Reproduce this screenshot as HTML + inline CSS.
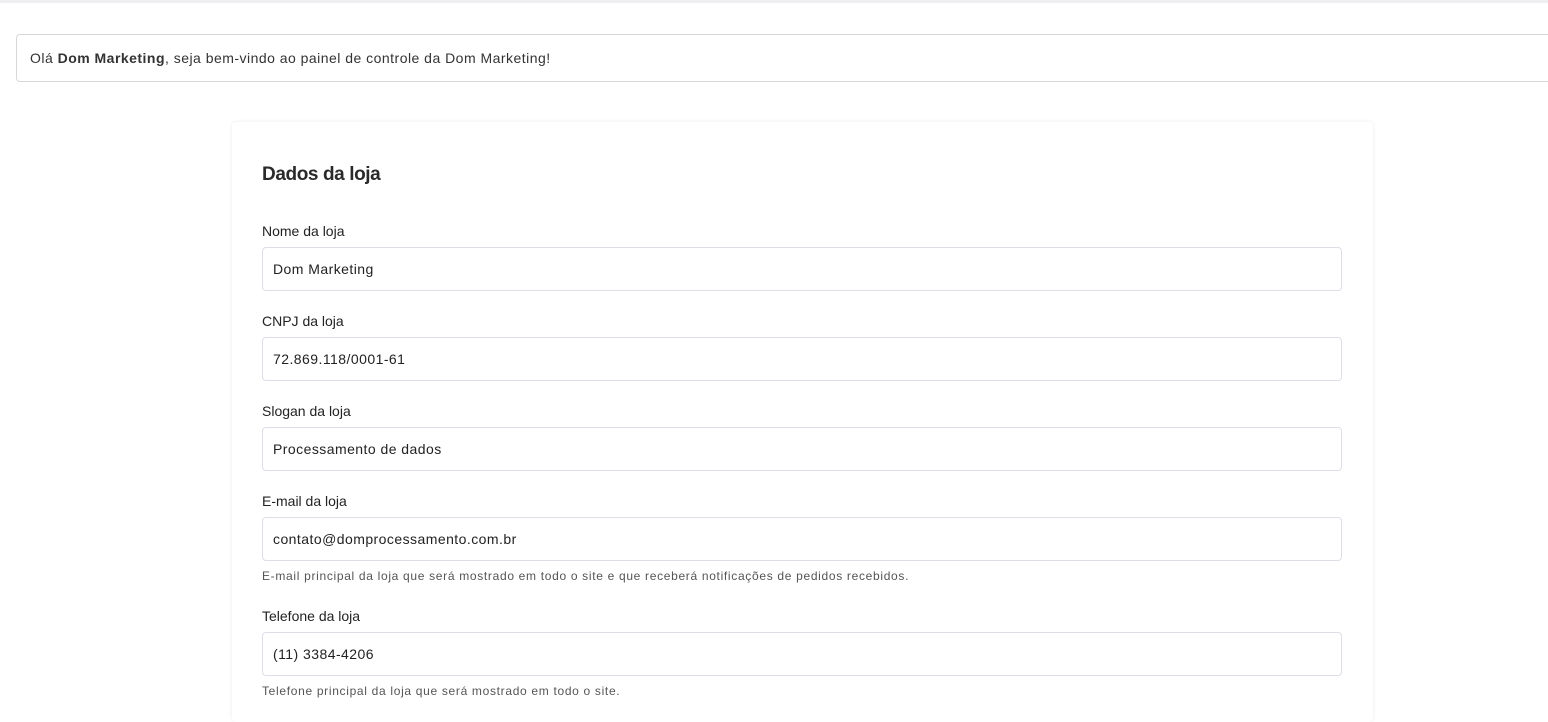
<!DOCTYPE html>
<html><head><meta charset="utf-8"><style>
*{box-sizing:border-box;margin:0;padding:0}
html,body{width:1548px;height:722px;overflow:hidden}
body{background:#fff;font-family:"Liberation Sans",sans-serif;color:#222;position:relative}
.top{position:absolute;left:0;top:0;width:1548px;height:3px;background:#eeeef0}
.greet{position:absolute;left:16px;top:34px;width:1560px;height:48px;border:1px solid #d8d8dc;border-radius:4px;font-size:14px;line-height:46px;padding-left:13px;letter-spacing:0.48px;color:#333}
.card{position:absolute;left:232px;top:122px;width:1141px;height:600px;background:#fff;border-radius:4px;box-shadow:0 0 4px rgba(0,0,0,0.08)}
h2{position:absolute;left:30px;top:42px;font-size:19px;font-weight:bold;color:#2a2a2a;letter-spacing:-0.4px}
.lbl{position:absolute;left:30px;font-size:14px;color:#222;letter-spacing:0px}
.inp{position:absolute;left:30px;width:1080px;height:44px;border:1px solid #dedde8;border-radius:4px;font-size:14px;line-height:42px;padding-left:10px;color:#222;letter-spacing:0.45px}
.help{position:absolute;left:30px;font-size:12px;color:#555;letter-spacing:0.68px}
</style></head><body>
<div class="top"></div>
<div class="greet">Olá <b>Dom Marketing</b>, seja bem-vindo ao painel de controle da Dom Marketing!</div>
<div class="card">
<h2>Dados da loja</h2>
<div class="lbl" style="top:101px">Nome da loja</div>
<div class="inp" style="top:125px">Dom Marketing</div>
<div class="lbl" style="top:191px">CNPJ da loja</div>
<div class="inp" style="top:215px">72.869.118/0001-61</div>
<div class="lbl" style="top:281px">Slogan da loja</div>
<div class="inp" style="top:305px">Processamento de dados</div>
<div class="lbl" style="top:371px">E-mail da loja</div>
<div class="inp" style="top:395px">contato@domprocessamento.com.br</div>
<div class="help" style="top:447px">E-mail principal da loja que será mostrado em todo o site e que receberá notificações de pedidos recebidos.</div>
<div class="lbl" style="top:486px">Telefone da loja</div>
<div class="inp" style="top:510px">(11) 3384-4206</div>
<div class="help" style="top:562px">Telefone principal da loja que será mostrado em todo o site.</div>
</div>
</body></html>
